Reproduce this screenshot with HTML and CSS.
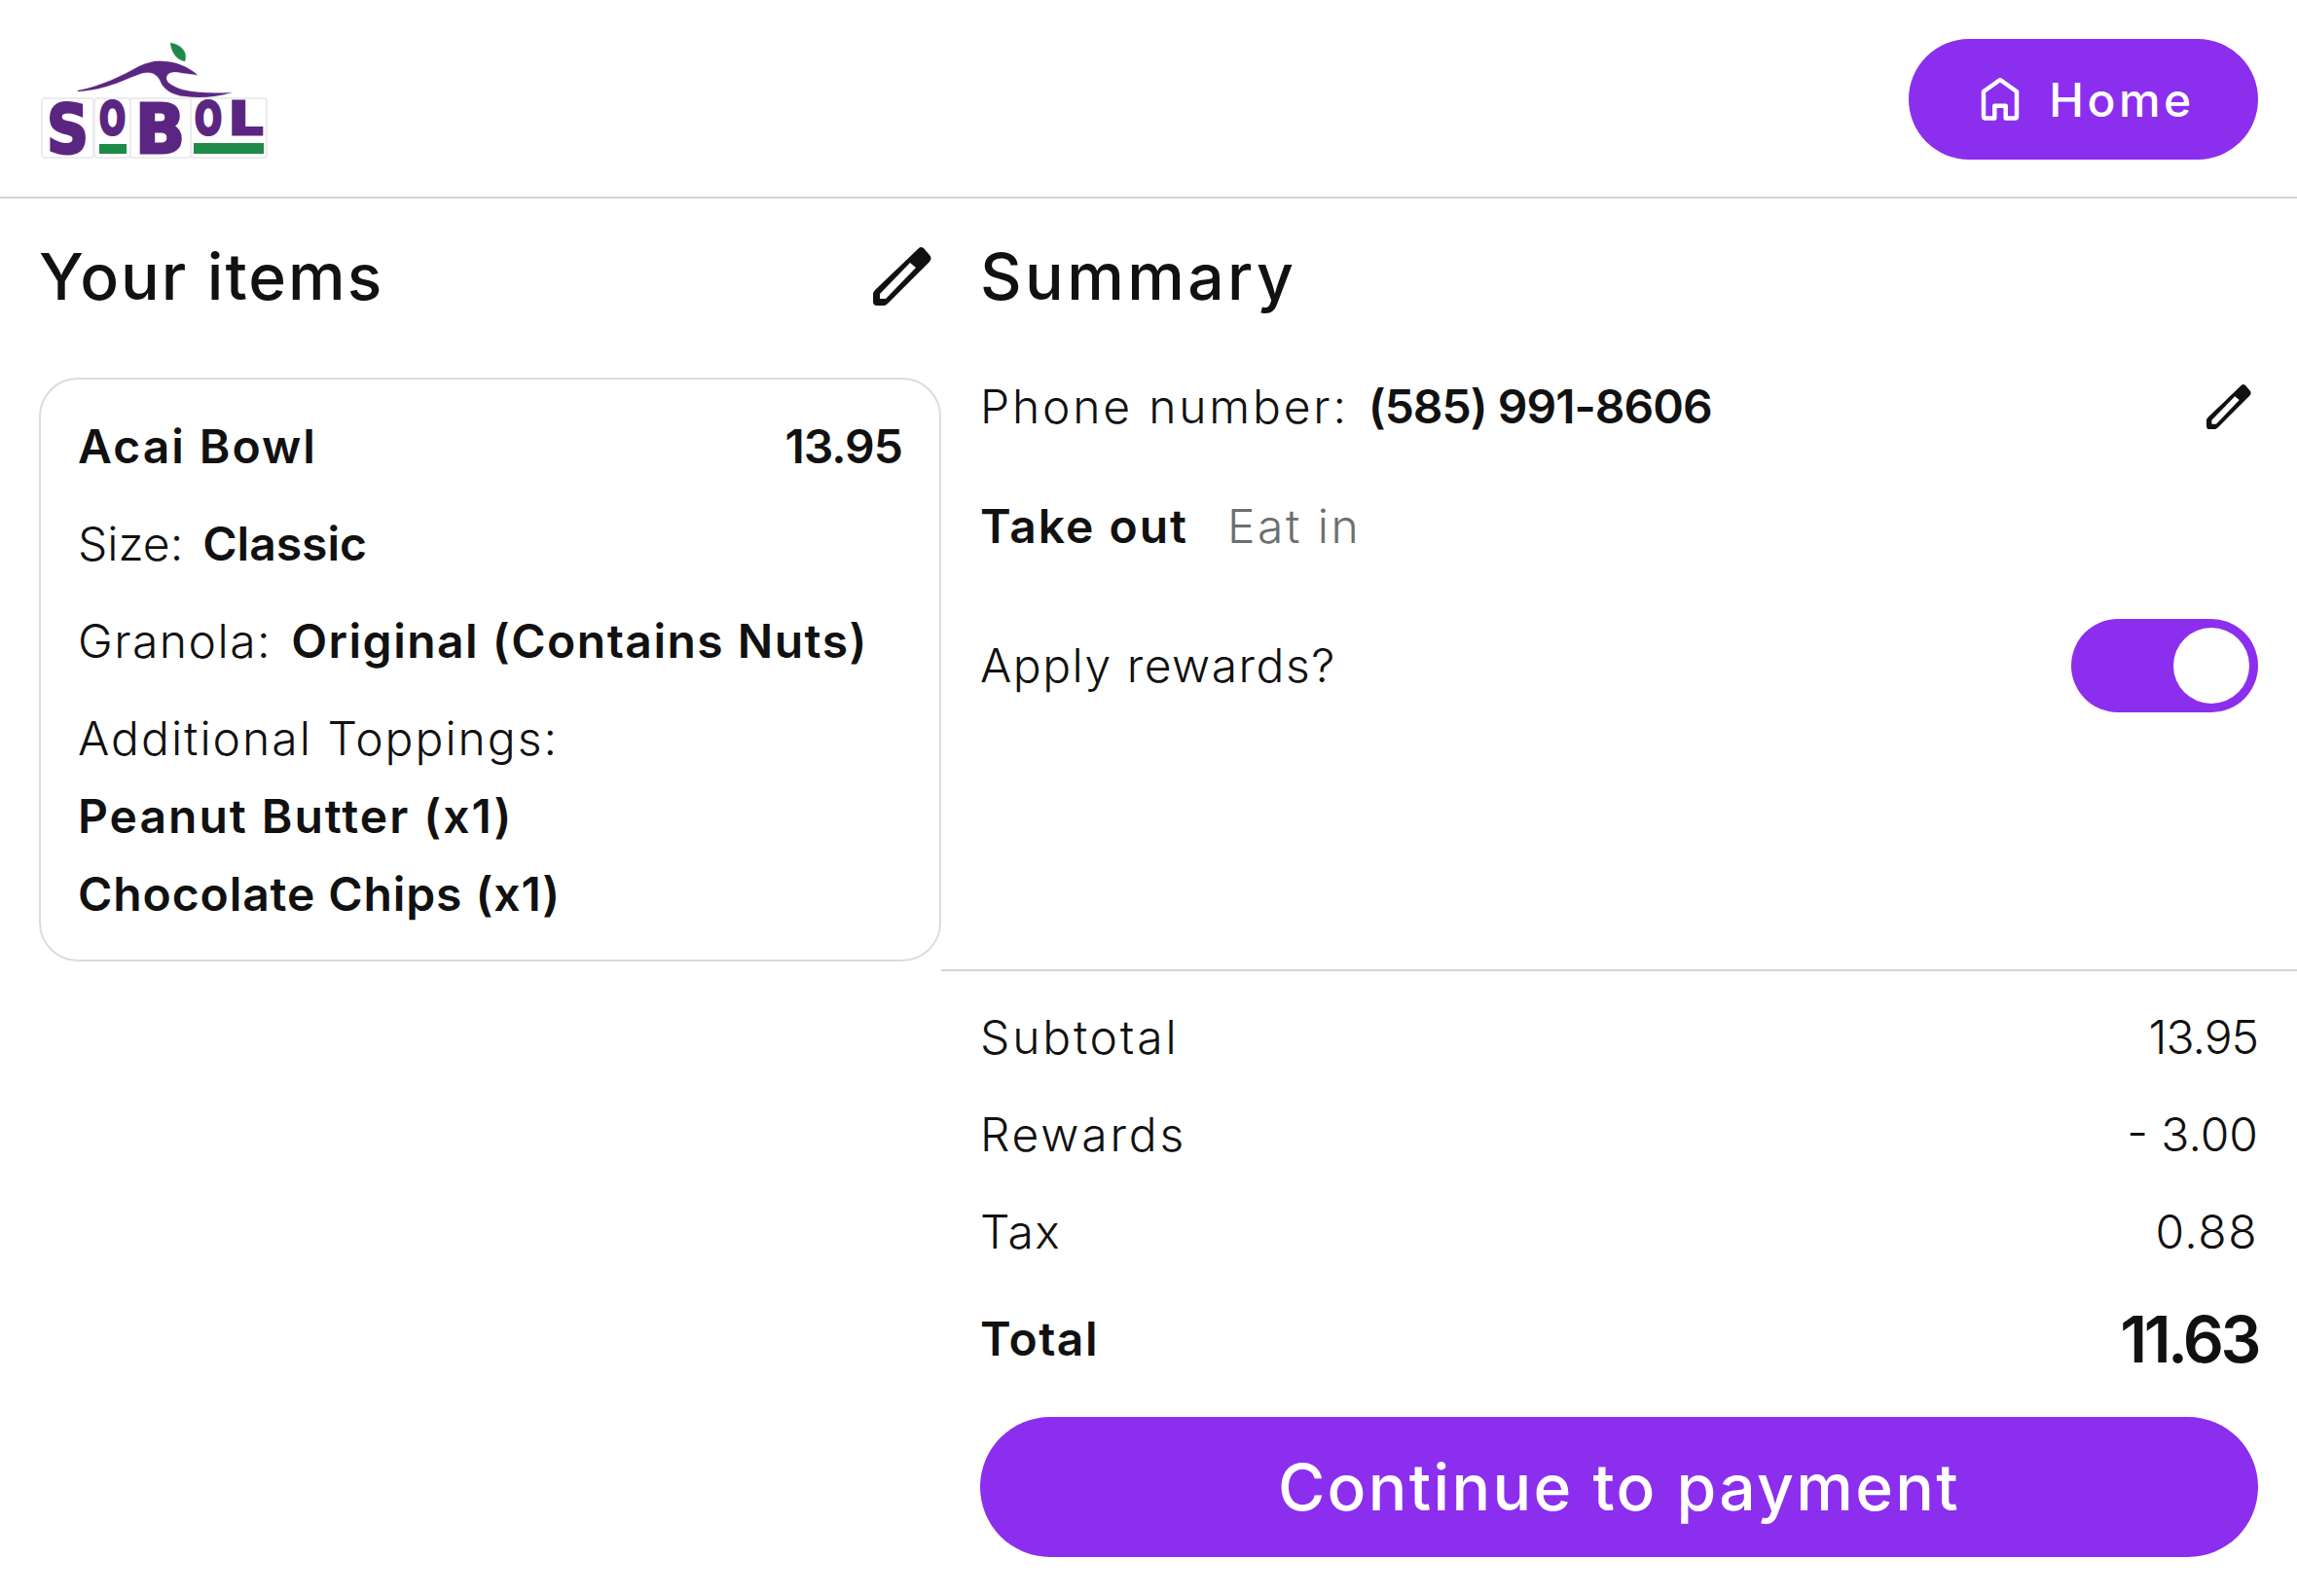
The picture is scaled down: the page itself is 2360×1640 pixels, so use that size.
FILE: index.html
```html
<!DOCTYPE html>
<html lang="en">
<head>
    <meta charset="UTF-8">
    <title>Checkout</title>
    <link rel="stylesheet" href="styles.css">
</head>
<body>
    <header class="topbar">
        <svg class="logo" width="320" height="203" viewBox="0 0 320 203">
            <defs>
                <path id="wave" d="M80 93C105 88 125 78 143 68C152 64 160 62 167 63C180 63 192 68 203 77L187 75C180 73 174 74 172 77C168 83 175 88 187 92C203 96 222 96 238 95C222 100 205 101 190 99C178 98 168 92 165 84C162 76 155 73 147 75C130 80 112 92 80 94Z"/>
                <path id="leaf" d="M175 44C187 46 193 54 190 63C182 62 176 54 175 44Z"/>
            </defs>
            <use href="#wave" class="logo-halo"/>
            <use href="#leaf" class="logo-halo"/>
            <use href="#wave" class="logo-purple"/>
            <use href="#leaf" class="logo-green"/>
            <rect class="logo-back" x="43" y="101" width="53" height="61" rx="3"/>
            <rect class="logo-back" x="97" y="101" width="37" height="61" rx="3"/>
            <rect class="logo-back" x="134" y="101" width="62" height="61" rx="3"/>
            <rect class="logo-back" x="196" y="101" width="78" height="61" rx="3"/>
            <text class="logo-letter" x="48" y="157" textLength="43" lengthAdjust="spacingAndGlyphs">S</text>
            <text class="logo-letter small" x="102" y="138" textLength="27" lengthAdjust="spacingAndGlyphs">O</text>
            <text class="logo-letter" x="139" y="157" textLength="51" lengthAdjust="spacingAndGlyphs">B</text>
            <text class="logo-letter small" x="200" y="138" textLength="28" lengthAdjust="spacingAndGlyphs">O</text>
            <text class="logo-letter small" x="235" y="138" textLength="35" lengthAdjust="spacingAndGlyphs">L</text>
            <rect class="logo-green" x="102" y="148" width="28" height="10"/>
            <rect class="logo-green" x="199" y="147" width="72" height="11"/>
        </svg>
        <button class="home-btn">
            <svg width="40" height="44" viewBox="0 0 40 44">
                <path class="home-icon" d="M20 2L37 14V39.5Q37 41.500 35 41.500H25.700V28.700H14.300V41.500H5Q3 41.500 3 39.500V14Z"/>
            </svg>
            Home
        </button>
    </header>

    <main class="checkout">
        <section class="items">
            <div class="title-row">
                <h1>Your items</h1>
                <svg width="60" height="60" viewBox="0 0 60 60">
                    <path class="pencil" fill-rule="evenodd" d="M47 1L2 44L0 47V56Q0 60 4 60H12L15 58L58 15Q61 11 58 8L52 1Q49 -1 47 1ZM38 16L7 48V53H13L44 21Z"/>
                </svg>
            </div>
            <div class="card">
                <div class="row between"><b class="loose">Acai Bowl</b><b class="num">13.95</b></div>
                <div class="row"><span class="flat">Size:</span><b class="flat">Classic</b></div>
                <div class="row"><span class="mid">Granola:</span><b>Original (Contains Nuts)</b></div>
                <div class="row"><span>Additional Toppings:</span></div>
                <div class="row tight"><b class="loose">Peanut Butter (x1)</b></div>
                <div class="row tight"><b class="snug">Chocolate Chips (x1)</b></div>
            </div>
        </section>

        <section class="summary">
            <div class="summary-top">
                <h1 class="summary-title">Summary</h1>
                <div class="row between phone">
                    <div class="row"><span class="wide">Phone number:</span><b class="num">(585) 991-8606</b></div>
                    <svg width="46" height="46" viewBox="0 0 60 60">
                        <path class="pencil" fill-rule="evenodd" d="M47 1L2 44L0 47V56Q0 60 4 60H12L15 58L58 15Q61 11 58 8L52 1Q49 -1 47 1ZM38 16L7 48V53H13L44 21Z"/>
                    </svg>
                </div>
                <div class="row order-type"><b class="loose">Take out</b><span class="muted">Eat in</span></div>
                <div class="row between rewards">
                    <span class="mid">Apply rewards?</span>
                    <div class="toggle"><div class="knob"></div></div>
                </div>
            </div>
            <div class="totals">
                <div class="row between"><span class="wide">Subtotal</span><span class="num">13.95</span></div>
                <div class="row between"><span class="wide">Rewards</span><span class="flat">- 3.00</span></div>
                <div class="row between"><span class="mid">Tax</span><span class="mid">0.88</span></div>
                <div class="row between total"><b>Total</b><b class="total-num">11.63</b></div>
                <button class="pay-btn">Continue to payment</button>
            </div>
        </section>
    </main>
</body>
</html>
```

FILE: styles.css
```css
* {
    box-sizing: border-box;
}
body {
    margin: 0;
    height: 1640px;
    overflow: hidden;
    background: #fff;
    color: #111;
    font-family: Inter, "Liberation Sans", sans-serif;
    font-size: 48px;
    font-weight: 300;
    line-height: 60px;
    letter-spacing: 2px;
}
b {
    font-weight: 600;
    letter-spacing: 1.500px;
}
.wide {
    letter-spacing: 2.800px;
}
.loose {
    letter-spacing: 2px;
}
.mid {
    letter-spacing: 1.500px;
}
.snug {
    letter-spacing: 0.900px;
}
.flat {
    letter-spacing: 0;
}
.num {
    letter-spacing: -1px;
}
.topbar {
    height: 204px;
    padding: 40px 40px 0 0;
    display: flex;
    justify-content: space-between;
    align-items: flex-start;
    border-bottom: 2px solid #d4d4d4;
}
.logo {
    margin-top: -40px;
}
.logo-halo {
    fill: #fff;
    stroke: #ececec;
    stroke-width: 2;
    stroke-linejoin: round;
}
.logo-back {
    fill: #fff;
    stroke: #ececec;
    stroke-width: 2;
}
.logo-purple {
    fill: #5b2682;
}
.logo-green {
    fill: #1e8a47;
}
.logo-letter {
    fill: #5b2682;
    stroke: #5b2682;
    stroke-width: 3;
    font-family: "DejaVu Sans", sans-serif;
    font-weight: 700;
    font-size: 70px;
    letter-spacing: 0;
}
.logo-letter.small {
    font-size: 46px;
}
.home-btn {
    width: 359px;
    height: 124px;
    padding: 0 0 0 9px;
    border: none;
    border-radius: 62px;
    background: #8c2eee;
    color: #fff;
    font-family: inherit;
    font-size: 48px;
    font-weight: 500;
    letter-spacing: 3.500px;
    display: flex;
    align-items: center;
    justify-content: center;
    gap: 30px;
}
.home-icon {
    fill: none;
    stroke: #fff;
    stroke-width: 4.500;
    stroke-linejoin: round;
}
.checkout {
    display: grid;
    grid-template-columns: 967px 1fr;
    height: 1436px;
}
h1 {
    margin: 0;
    font-size: 66px;
    line-height: 80px;
    font-weight: 500;
    letter-spacing: 2px;
}
.summary-title {
    letter-spacing: 3.400px;
}
.items {
    padding: 40px 0 0 40px;
}
.title-row {
    display: flex;
    justify-content: space-between;
    align-items: center;
    padding-right: 10px;
}
.pencil {
    fill: #111;
}
.card {
    margin-top: 64px;
    height: 600px;
    padding: 39px 38px;
    border: 2px solid #dcdcdc;
    border-radius: 40px;
    display: flex;
    flex-direction: column;
    gap: 40px;
}
.card .tight {
    margin-top: -20px;
}
.row {
    display: flex;
    align-items: center;
    gap: 20px;
}
.between {
    justify-content: space-between;
}
.summary {
    display: flex;
    flex-direction: column;
}
.summary-top {
    height: 794px;
    padding: 40px 40px 0 40px;
    border-bottom: 2px solid #d4d4d4;
}
.phone {
    margin-top: 64px;
}
.phone svg {
    margin-right: 7px;
}
.order-type {
    margin-top: 63px;
    gap: 40px;
}
.muted {
    color: #6e6e6e;
    letter-spacing: 2.500px;
}
.rewards {
    margin-top: 65px;
}
.toggle {
    width: 192px;
    height: 96px;
    padding: 9px;
    border-radius: 48px;
    background: #8c2eee;
    display: flex;
    justify-content: flex-end;
}
.knob {
    width: 78px;
    height: 78px;
    border-radius: 50%;
    background: #fff;
}
.totals {
    padding: 38px 40px 0 40px;
    display: flex;
    flex-direction: column;
    gap: 40px;
}
.total {
    margin-top: 10px;
}
.total-num {
    font-size: 66px;
    letter-spacing: -3.500px;
}
.pay-btn {
    height: 144px;
    margin-top: 10px;
    border: none;
    border-radius: 72px;
    background: #8c2eee;
    color: #fff;
    font-family: inherit;
    font-size: 66px;
    font-weight: 500;
    letter-spacing: 2.300px;
}
```
